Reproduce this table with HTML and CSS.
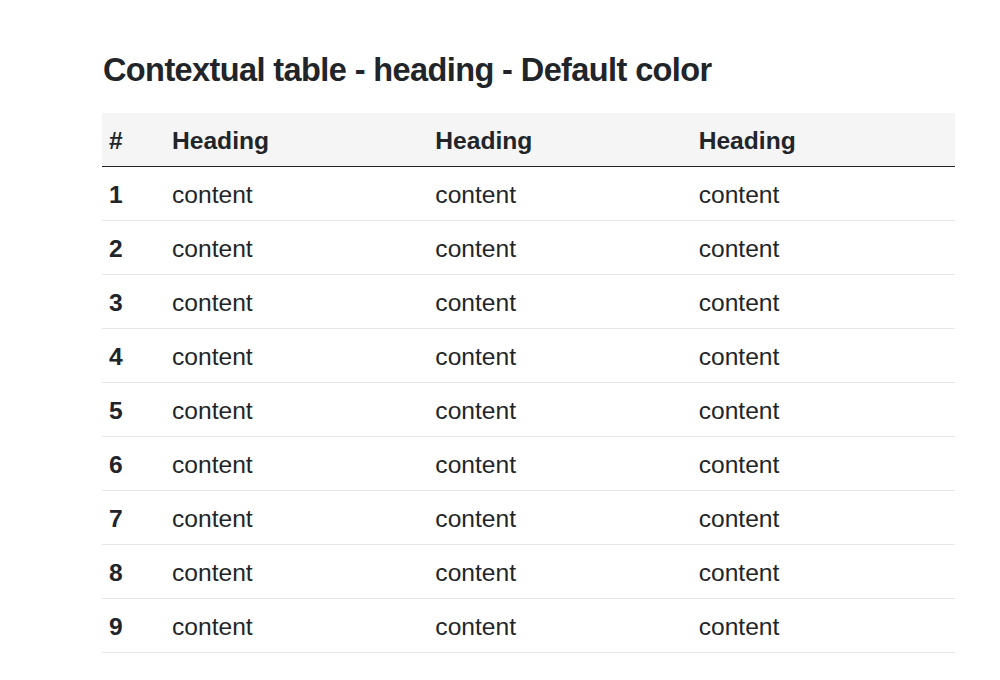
FILE: index.html
```html
<!DOCTYPE html>
<html>
<head>
<meta charset="utf-8">
<link rel="stylesheet" href="styles.css">
</head>
<body>
<div class="page">
  <h2 class="title">Contextual table - heading - Default color</h2>
  <table class="table">
    <thead>
      <tr><th class="num">#</th><th>Heading</th><th>Heading</th><th>Heading</th></tr>
    </thead>
    <tbody>
      <tr><th class="num">1</th><td>content</td><td>content</td><td>content</td></tr>
      <tr><th class="num">2</th><td>content</td><td>content</td><td>content</td></tr>
      <tr><th class="num">3</th><td>content</td><td>content</td><td>content</td></tr>
      <tr><th class="num">4</th><td>content</td><td>content</td><td>content</td></tr>
      <tr><th class="num">5</th><td>content</td><td>content</td><td>content</td></tr>
      <tr><th class="num">6</th><td>content</td><td>content</td><td>content</td></tr>
      <tr><th class="num">7</th><td>content</td><td>content</td><td>content</td></tr>
      <tr><th class="num">8</th><td>content</td><td>content</td><td>content</td></tr>
      <tr><th class="num">9</th><td>content</td><td>content</td><td>content</td></tr>
    </tbody>
  </table>
</div>
</body>
</html>
```
FILE: styles.css
```css
html, body {
  margin: 0;
  padding: 0;
  background: #ffffff;
}
body {
  font-family: "Liberation Sans", Arial, sans-serif;
  color: #212529;
}
.page {
  padding: 51px 45px 0 102px;
}
.title {
  margin: 0 0 24px 1px;
  font-size: 32.5px;
  line-height: 38px;
  font-weight: 700;
  letter-spacing: -0.6px;
  color: #212529;
}
.table {
  width: 853px;
  border-collapse: collapse;
  table-layout: fixed;
  font-size: 24.6px;
}
.table th, .table td {
  padding: 3px 7px 0 7px;
  height: 50px;
  text-align: left;
  vertical-align: middle;
  line-height: 28px;
}
.table th { font-weight: 700; }
.table td { font-weight: 400; }
.table th.num { width: 49px; }
.table thead tr {
  background: #f5f5f5;
  border-bottom: 1px solid #212529;
}
.table thead th { height: 51px; padding-top: 2px; }
.table tbody tr {
  border-bottom: 1px solid #e8e8e8;
}
```
